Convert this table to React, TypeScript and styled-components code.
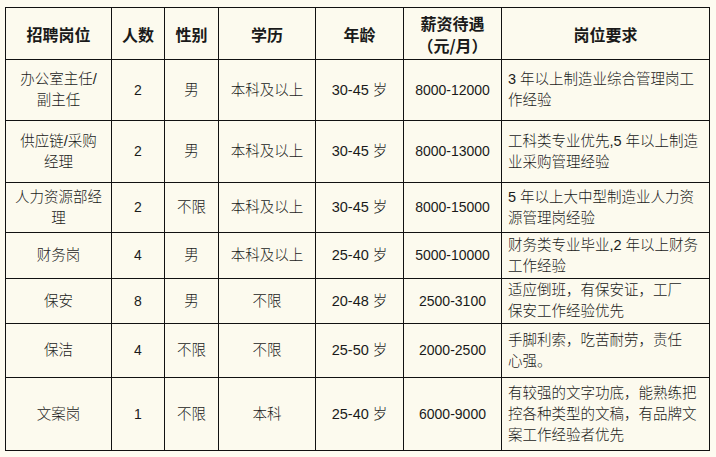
import React from "react";
import styled, { createGlobalStyle } from "styled-components";

const GlobalStyle = createGlobalStyle`
  html, body {
    margin: 0;
    padding: 0;
    background: #fdfbf0;
  }
`;

type Job = {
  title: React.ReactNode;
  count: string;
  gender: string;
  edu: string;
  age: string;
  pay: string;
  req: React.ReactNode;
  h: number;
};

const jobs: Job[] = [
  {
    title: <>办公室主任/<br />副主任</>,
    count: "2", gender: "男", edu: "本科及以上", age: "30-45 岁", pay: "8000-12000",
    req: <>3 年以上制造业综合管理岗工<br />作经验</>, h: 61,
  },
  {
    title: <>供应链/采购<br />经理</>,
    count: "2", gender: "男", edu: "本科及以上", age: "30-45 岁", pay: "8000-13000",
    req: <>工科类专业优先,5 年以上制造<br />业采购管理经验</>, h: 62,
  },
  {
    title: <>人力资源部经<br />理</>,
    count: "2", gender: "不限", edu: "本科及以上", age: "30-45 岁", pay: "8000-15000",
    req: <>5 年以上大中型制造业人力资<br />源管理岗经验</>, h: 50,
  },
  {
    title: "财务岗",
    count: "4", gender: "男", edu: "本科及以上", age: "25-40 岁", pay: "5000-10000",
    req: <>财务类专业毕业,2 年以上财务<br />工作经验</>, h: 46,
  },
  {
    title: "保安",
    count: "8", gender: "男", edu: "不限", age: "20-48 岁", pay: "2500-3100",
    req: <>适应倒班，有保安证，工厂<br />保安工作经验优先</>, h: 45,
  },
  {
    title: "保洁",
    count: "4", gender: "不限", edu: "不限", age: "25-50 岁", pay: "2000-2500",
    req: <>手脚利索，吃苦耐劳，责任<br />心强。</>, h: 54,
  },
  {
    title: "文案岗",
    count: "1", gender: "不限", edu: "本科", age: "25-40 岁", pay: "6000-9000",
    req: <>有较强的文字功底，能熟练把<br />控各种类型的文稿，有品牌文<br />案工作经验者优先</>, h: 73,
  },
];

const widths = [106, 53, 54, 97, 88, 98, 208];

export default function App() {
  return (
    <Page>
      <GlobalStyle />
      <Table>
        <colgroup>
          {widths.map((w, i) => (
            <col key={i} style={{ width: w }} />
          ))}
        </colgroup>
        <thead>
          <Row $h={52}>
            <HeadCell>招聘岗位</HeadCell>
            <HeadCell>人数</HeadCell>
            <HeadCell>性别</HeadCell>
            <HeadCell>学历</HeadCell>
            <HeadCell>年龄</HeadCell>
            <HeadCell>薪资待遇<br />（元/月）</HeadCell>
            <HeadCell>岗位要求</HeadCell>
          </Row>
        </thead>
        <tbody>
          {jobs.map((j, i) => (
            <Row key={i} $h={j.h}>
              <Cell>{j.title}</Cell>
              <Cell $num>{j.count}</Cell>
              <Cell>{j.gender}</Cell>
              <Cell>{j.edu}</Cell>
              <Cell>{j.age}</Cell>
              <Cell $num>{j.pay}</Cell>
              <Cell $left>{j.req}</Cell>
            </Row>
          ))}
        </tbody>
      </Table>
    </Page>
  );
}

const Page = styled.div`
  padding: 7px 0 0 5px;
  font-family: "Liberation Sans", "Noto Sans CJK SC", sans-serif;
  color: #1a1a1a;
`;

const Table = styled.table`
  border-collapse: collapse;
  table-layout: fixed;
  width: 705px;
  background: #fcfaee;
  border: 1.5px solid #111;
`;

const Row = styled.tr<{ $h: number }>`
  height: ${({ $h }) => $h}px;
`;

const HeadCell = styled.th`
  border: 1px solid #111;
  padding: 0 4px;
  font-family: "Noto Sans CJK SC", sans-serif;
  font-size: 16px;
  font-weight: 700;
  line-height: 22px;
  text-align: center;
  vertical-align: middle;
`;

const Cell = styled.td<{ $left?: boolean; $num?: boolean }>`
  border: 1px solid #111;
  padding: 0 ${({ $left }) => ($left ? "4px 0 6px" : "6px")};
  font-size: ${({ $num }) => ($num ? "14px" : "14.5px")};
  line-height: 21px;
  text-align: ${({ $left }) => ($left ? "left" : "center")};
  vertical-align: middle;
  white-space: nowrap;
  font-weight: 300;
`;
